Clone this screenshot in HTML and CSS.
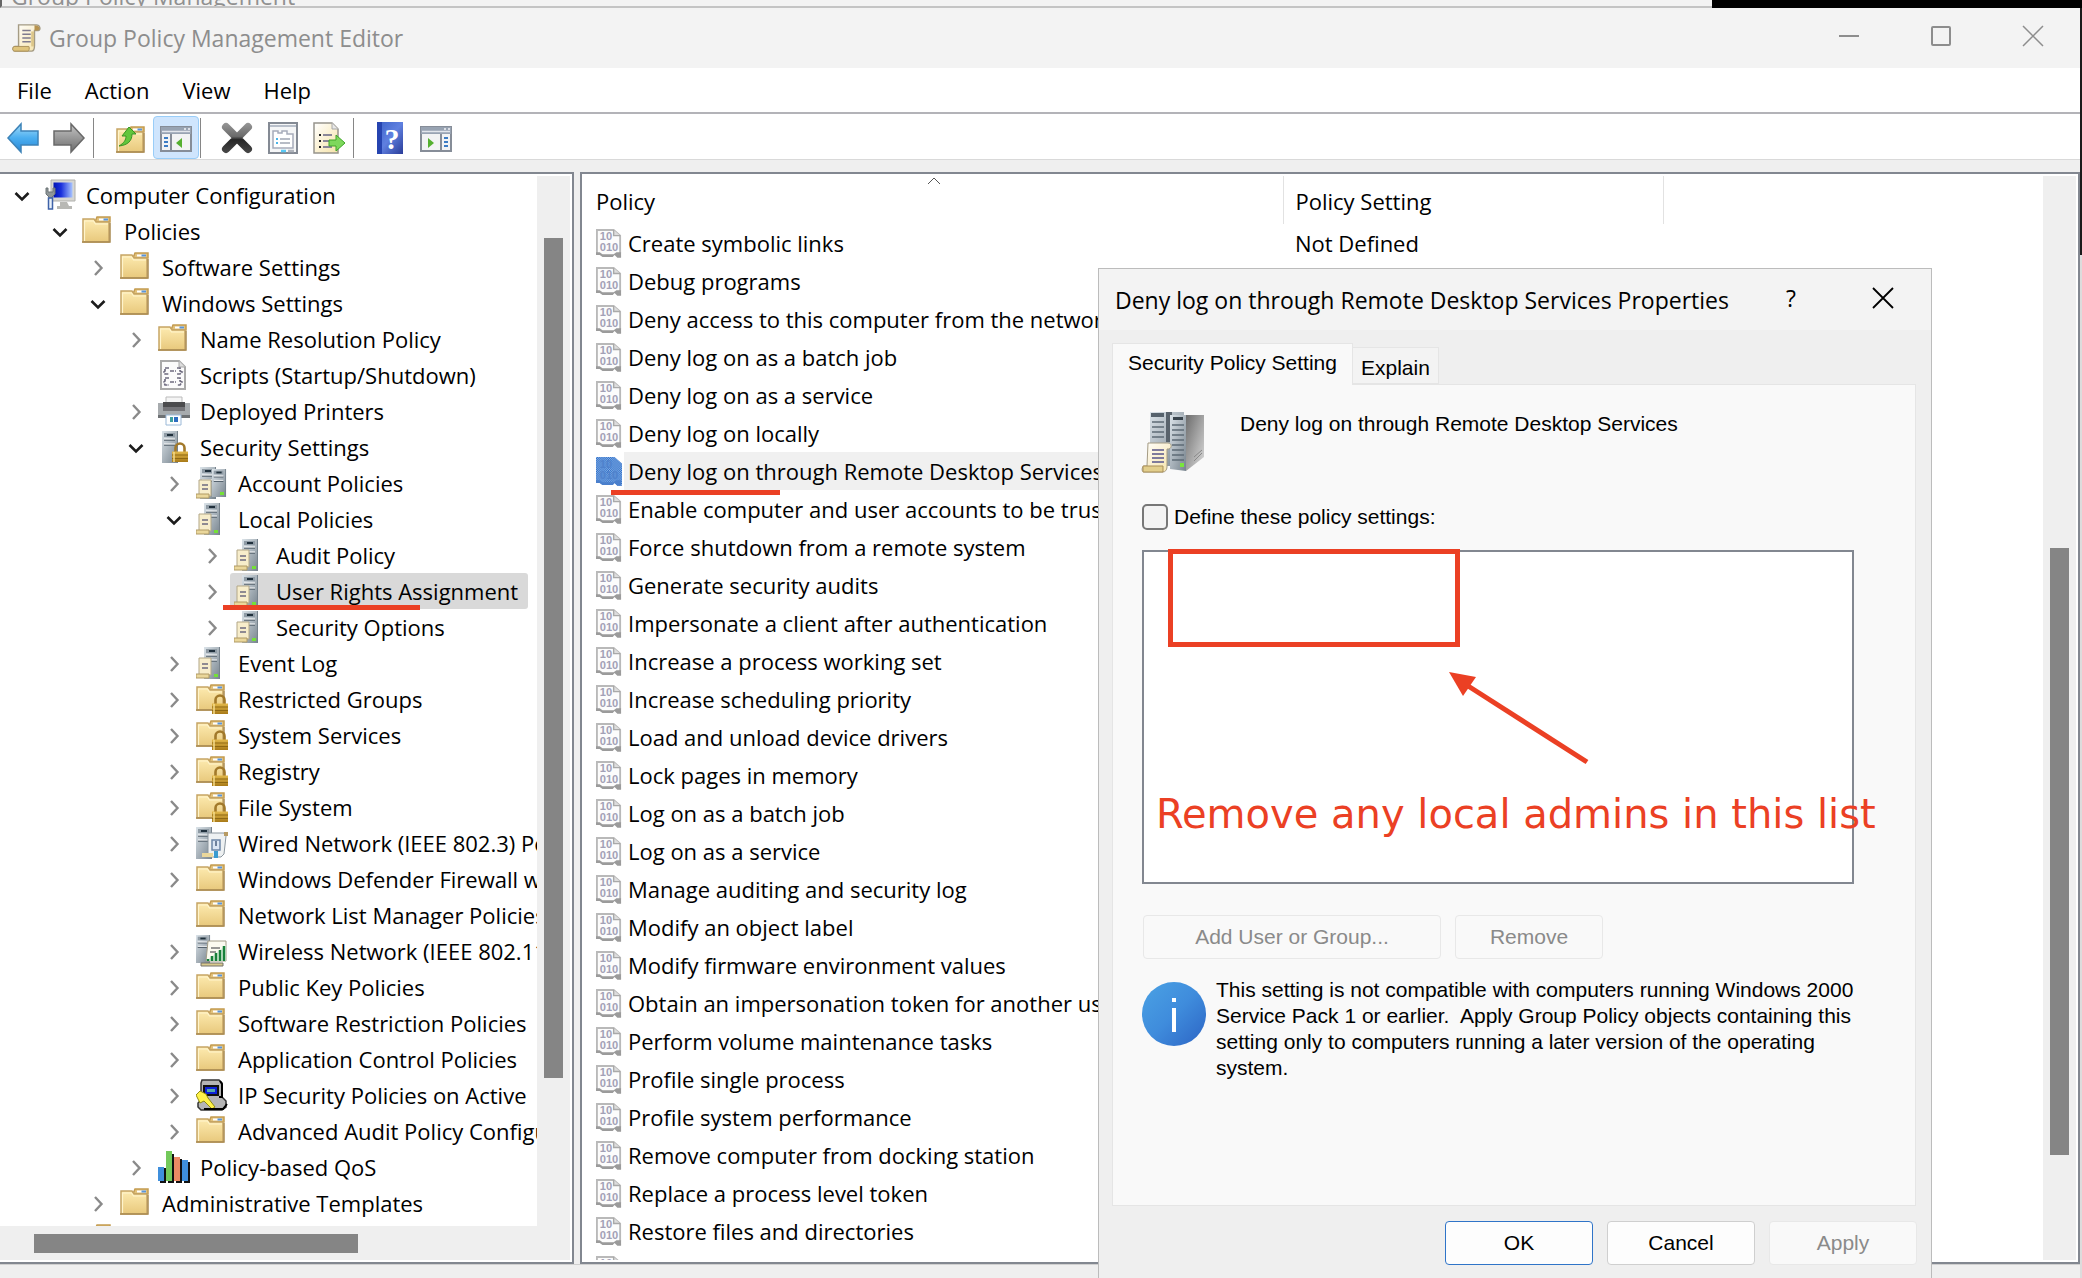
FILE: index.html
```html
<!DOCTYPE html>
<html lang="en">
<head>
<meta charset="utf-8">
<title>Group Policy Management Editor</title>
<link rel="stylesheet" href="styles.css">
</head>
<body>
<svg class="defs" aria-hidden="true">
  <defs>
    <linearGradient id="gFolder" x1="0" y1="0" x2="0" y2="1"><stop offset="0" stop-color="#fdebb0"/><stop offset="1" stop-color="#e8c87c"/></linearGradient>
    <linearGradient id="gBlue" x1="0" y1="0" x2="0" y2="1"><stop offset="0" stop-color="#a5dcf8"/><stop offset="0.5" stop-color="#4aaef0"/><stop offset="1" stop-color="#2a86d4"/></linearGradient>
    <linearGradient id="gGrey" x1="0" y1="0" x2="0" y2="1"><stop offset="0" stop-color="#c4c4c4"/><stop offset="1" stop-color="#6c6c6c"/></linearGradient>
    <linearGradient id="gServer" x1="0" y1="0" x2="1" y2="1"><stop offset="0" stop-color="#dbe3e9"/><stop offset="1" stop-color="#77838d"/></linearGradient>
    <linearGradient id="gCase" x1="0" y1="0" x2="1" y2="1"><stop offset="0" stop-color="#6d6d6d"/><stop offset="1" stop-color="#dcdcdc"/></linearGradient>
    <linearGradient id="gPaper" x1="0" y1="0" x2="1" y2="1"><stop offset="0" stop-color="#ffffff"/><stop offset="1" stop-color="#f6e3a8"/></linearGradient>
    <linearGradient id="gLock" x1="0" y1="0" x2="0" y2="1"><stop offset="0" stop-color="#e2b84a"/><stop offset="1" stop-color="#a87a18"/></linearGradient>
    <linearGradient id="gScreen" x1="0" y1="0" x2="1" y2="0"><stop offset="0" stop-color="#0014b4"/><stop offset="0.4" stop-color="#1a30dc"/><stop offset="1" stop-color="#a8c4ff"/></linearGradient>
    <linearGradient id="gHelp" x1="0" y1="0" x2="1" y2="1"><stop offset="0" stop-color="#3c62c8"/><stop offset="0.5" stop-color="#5f80e0"/><stop offset="1" stop-color="#2a3c98"/></linearGradient>
    <linearGradient id="gInfo" x1="0" y1="0" x2="1" y2="1"><stop offset="0" stop-color="#4ba2e4"/><stop offset="0.5" stop-color="#3f8cdc"/><stop offset="1" stop-color="#2c64c4"/></linearGradient>
    <linearGradient id="gX" gradientUnits="userSpaceOnUse" x1="0" y1="0" x2="0" y2="32"><stop offset="0" stop-color="#9a9a9a"/><stop offset="0.45" stop-color="#6a6a6a"/><stop offset="0.55" stop-color="#262626"/><stop offset="1" stop-color="#4a4a4a"/></linearGradient>
    <pattern id="hatch" width="2" height="2" patternUnits="userSpaceOnUse"><path d="M0 0h2v2H0z" fill="#8db4e6"/><path d="M0 0h1v1H0zM1 1h1v1H1z" fill="#2a6cc8"/></pattern>
  </defs>
  <symbol id="open" viewBox="0 0 16 16"><path d="M1.500 5 8 11.500 14.500 5" fill="none" stroke="#1c1c1c" stroke-width="2.600"/></symbol>
  <symbol id="closed" viewBox="0 0 16 16"><path d="M5 1 11.500 8 5 15" fill="none" stroke="#8a8a8a" stroke-width="2.400"/></symbol>
  <symbol id="folder" viewBox="0 0 32 32">
    <path d="M15 2h13v5H13z" fill="#e2c27c" stroke="#c49c50" stroke-width="1.500"/><path d="M17 3.500h9v2h-9z" fill="#fff"/><path d="M21.500 3.500H26v2h-4.500z" fill="#5b95d8"/>
    <path d="M1 4h11l2 3h13v20H1z" fill="url(#gFolder)" stroke="#c6a565" stroke-width="1.500"/><path d="M2.500 26V6h9l2 3H26" fill="none" stroke="#fff4cc" stroke-width="1.200"/><path d="M0 27h28V8" fill="none" stroke="#a98b52" stroke-width="1.500"/>
  </symbol>
  <symbol id="lock" viewBox="0 0 32 32"><path d="M19.500 21v-4a4.500 4.500 0 0 1 9 0v4" fill="none" stroke="#a2792a" stroke-width="2.600"/><path d="M16 20.500h16V31H16z" fill="url(#gLock)"/><path d="M16 24h16M16 27.500h16" stroke="#8f6812" stroke-width="1"/><path d="M18 21v10" stroke="#f6dc8c" stroke-width="1.500"/></symbol>
  <symbol id="folderlock" viewBox="0 0 32 32"><use href="#folder"/><use href="#lock"/></symbol>
  <symbol id="tower" viewBox="0 0 32 32"><path d="M0 0h16v32H0z" fill="url(#gServer)"/><path d="M2 2h11v4H2z" fill="#8f9ba5"/><path d="M5 3h6v2H5z" fill="#20303c"/><path d="M2 9h11M2 14h11" stroke="#56636e" stroke-width="1.500"/><path d="M2 8h11M2 13h11" stroke="#fff" stroke-width="1"/><path d="M15.500 0v32" stroke="#76828c"/></symbol>
  <symbol id="scroll" viewBox="0 0 32 32"><path d="M7 2h19c4 0 5 5 2 6h-4v16c0 4-1 6-3 6H3c-2 0-3-4 0-5h4z" fill="url(#gPaper)" stroke="#a49b84" stroke-width="1.500"/><path d="M24 2.500c6 0 7 5 3 5.500h-3z" fill="#b7934f"/><path d="M22 9v16" stroke="#dcc68a" stroke-width="3"/><path d="M3 25h15c1 2 0 5-1 5H3c-3 0-3-5 0-5z" fill="#dfc47c" stroke="#a98f58"/><path d="M11 8h9M11 12h9M11 16h9M11 20h9" stroke="#7f7b8e" stroke-width="1.800"/></symbol>
  <symbol id="serverlock" viewBox="0 0 32 32"><use href="#tower" x="4" y="0" width="32" height="32"/><use href="#lock" x="-2"/></symbol>
  <symbol id="policy" viewBox="0 0 32 32"><use href="#tower" x="8" width="32" height="32"/><path d="M18 27h4v3h-4z" fill="#74e038"/><path d="M3 11h12v17H3z" fill="#f7edcb" stroke="#b3a787"/><path d="M0 27h13v4H0z" fill="#ead79b" stroke="#b09a64"/><path d="M6 17h6M6 21h6" stroke="#6d6a80" stroke-width="1.600"/></symbol>
  <symbol id="account" viewBox="0 0 32 32"><use href="#tower" x="4" width="32" height="32"/><use href="#tower" x="16" y="2" width="28" height="28"/><path d="M24 25h4v3h-4z" fill="#74e038"/><path d="M3 13h12v16H3z" fill="#f7edcb" stroke="#b3a787"/><path d="M0 27h13v4H0z" fill="#ead79b" stroke="#b09a64"/><path d="M6 18h6M6 22h6" stroke="#6d6a80" stroke-width="1.600"/></symbol>
  <symbol id="wired" viewBox="0 0 32 32"><use href="#tower" width="32" height="32"/><path d="M12 6h16l2 3-2 18-3 3H12z" fill="#eef1f2" stroke="#8b969e"/><path d="M28 5h4v4h-4z" fill="#b89b63"/><path d="M16 13h8v10h-8z" fill="#dce6f4" stroke="#6e86a8" stroke-width="1.500"/><path d="M20 14v5" stroke="#4a5f80" stroke-width="1.500"/><path d="M6 26h11v4H6z" fill="#ead79b"/><path d="M18 24h4v7h-4z" fill="#3b9bd0"/></symbol>
  <symbol id="wireless" viewBox="0 0 32 32"><use href="#tower" width="28" height="28"/><path d="M12 6h18v20H10z" fill="#fbfaf0" stroke="#a39c88"/><path d="M15 13h9M14 17h6" stroke="#777" stroke-width="1.500"/><path d="M10 26 30 10v16z" fill="#dcefdc"/><path d="M12 26v-2M16 26v-5M20 26v-8M24 26V15M28 26V11" stroke="#17803a" stroke-width="2.500"/><path d="M5 28h22v3H5z" fill="#d8c98c" stroke="#77736a"/></symbol>
  <symbol id="computer" viewBox="0 0 32 32"><path d="M7 1h24v21H7z" fill="#d6d6d2" stroke="#b0b0ac"/><path d="M9.500 3.500h19v15h-19z" fill="url(#gScreen)"/><path d="M16 23h7l2 4h3v3H13v-3h3z" fill="#b8b8b4"/><path d="M2 9v6l3 3v11h3V18l3-3V9H9v4H4V9z" fill="#8f9698" stroke="#6c7476"/><path d="M4.500 19h4v11h-4z" fill="#e9f1fa" stroke="#3e62a8" stroke-width="1.500"/></symbol>
  <symbol id="script" viewBox="0 0 32 32"><path d="M3 2h18l6 6v22H3z" fill="#fbfbfb" stroke="#a9a9a9" stroke-width="2"/><path d="M21 2v6h6" fill="#ddd" stroke="#a9a9a9"/><path d="M11 9H7v3l-1 1 1 2h4M19 9h3v3l2 1-2 2h-3M11 19H7v3l-1 1 1 3h4M19 19h3v3l2 1-2 3h-3M12 12h6M12 23h6" fill="none" stroke="#6f6c80" stroke-width="1.700" stroke-dasharray="4 1"/></symbol>
  <symbol id="printer" viewBox="0 0 32 32"><path d="M8 2h16v8H8z" fill="#f4f4f4" stroke="#bbb"/><path d="M0 8h32v14H0z" fill="#a7abae"/><path d="M5 7h22v9H5z" fill="#4b4b4d"/><path d="M5 12h22v4H5z" fill="#747478"/><path d="M0 20h32v3H0z" fill="#6e7174"/><path d="M8 20h15v10H8z" fill="#fff" stroke="#9bb9d8"/><path d="M12 22h3v5h-3z" fill="#3fa0a0"/><path d="M16 22h4v5h-4z" fill="#2d6cc0"/></symbol>
  <symbol id="ipsec" viewBox="0 0 32 32"><path d="M6 1h17l3 3v14l4 4v6l-4 3H5l-3-3v-4l3-3V4z" fill="#b5b5b5" stroke="#333" stroke-width="1.500"/><path d="M8 7h14v9H8z" fill="#0d22d8" stroke="#111" stroke-width="2"/><path d="M11 10h8v3h-8z" fill="#5aa"/><path d="M24 2l2 3v13h-3" fill="none" stroke="#000" stroke-width="2"/><path d="M0 16l4-4 6 3 2 4 7 9-3 2-8-8-4 2z" fill="#fff34a" stroke="#8f8a10"/><path d="M8 30h19l4-5" fill="none" stroke="#000" stroke-width="2"/></symbol>
  <symbol id="qos" viewBox="0 0 32 32"><path d="M2 17h6v15H2zM10 3h6v29h-6zM18 8h6v24h-6zM26 11h6v21h-6z" fill="#111"/><path d="M0 16h6v14H0z" fill="#3f8fdc"/><path d="M8 0h6v30H8z" fill="#73c95a"/><path d="M16 6h6v24h-6z" fill="#ec8a64"/><path d="M24 9h6v21h-6z" fill="#3f8fdc"/></symbol>
  <symbol id="binary" viewBox="0 0 28 32"><path d="M1 2h19l6 6v19l2 4h-5l-3-3-2 2H7l-2-2H1z" fill="#fcfcfc"/><path d="M1 28V2h18l7 6v19" fill="none" stroke="#b9b9b9" stroke-width="2"/><path d="M19 2v6h7" fill="#ddd" stroke="#a9a9a9" stroke-width="1.500"/><path d="M0 26h4l3 2h12l3-2h5v6h-4l-3-3-2 2H7l-3-2H0z" fill="#9b9b9b"/><text x="4" y="13" class="bits">10</text><text x="4" y="25" class="bits">010</text></symbol>
  <symbol id="binarysel" viewBox="0 0 28 32"><path d="M0 1h20l8 7v24h-5l-3-3-2 2H7l-3-2H0z" fill="url(#hatch)"/><path d="M0 26h4l3 2h12l3-2h5v6h-4l-3-3-2 2H7l-3-2H0z" fill="#4a7fcc"/><text x="4" y="13" class="bits blue">10</text><text x="4" y="25" class="bits blue">010</text></symbol>
  <symbol id="window" viewBox="0 0 32 26"><path d="M1 1h30v24H1z" fill="#f2f3f4" stroke="#868d98" stroke-width="2"/><path d="M1 1h30v7H1z" fill="#98a3b2"/><path d="M2 5.500h28" stroke="#e2e6ec" stroke-width="1.500"/><path d="M24 3h2M28 3h2" stroke="#f2f4f8" stroke-width="1.500"/></symbol>
</svg>

<div class="behind"><span>Group Policy Management</span></div>

<div class="app">
  <header class="titlebar">
    <svg class="ic30"><use href="#scroll"/></svg>
    <h1>Group Policy Management Editor</h1>
    <div class="winbtns">
      <button aria-label="Minimize"><svg viewBox="0 0 20 20"><path d="M0 10h20" stroke-width="2"/></svg></button>
      <button aria-label="Maximize"><svg viewBox="0 0 20 20"><rect x="1" y="1" width="18" height="18" rx="1" stroke-width="2"/></svg></button>
      <button aria-label="Close"><svg viewBox="0 0 20 20"><path d="M0 0 20 20M20 0 0 20" stroke-width="1.500"/></svg></button>
    </div>
  </header>
  <nav class="menu"><button>File</button><button>Action</button><button>View</button><button>Help</button></nav>
  <div class="toolbar">
    <button aria-label="Back"><svg viewBox="0 0 32 32"><path d="M1 16 14 2v7h17v14H14v7z" fill="url(#gBlue)" stroke="#3d83b8" stroke-width="1.500"/></svg></button>
    <button aria-label="Forward"><svg viewBox="0 0 32 32"><path d="M31 16 18 2v7H1v14h17v7z" fill="url(#gGrey)" stroke="#696969" stroke-width="1.500"/></svg></button>
    <i></i>
    <button aria-label="Up"><svg viewBox="-2 -3 32 32"><use href="#folder" width="32" height="32"/><path d="M3 21c5-3 7-6 7-10H6l7-9 7 7h-4c0 7-4 11-13 12z" fill="#62c63c" stroke="#3b9424"/></svg></button>
    <button class="on" aria-label="Console tree"><svg viewBox="0 -4 32 32"><use href="#window" width="32" height="26"/><path d="M11 8v17" stroke="#868d98" stroke-width="2"/><path d="M4 12h4M4 16h4M4 20h4" stroke="#3c7cc4" stroke-width="2"/><path d="M22 12v10l-6-5z" fill="#55b030"/></svg></button>
    <i></i>
    <button aria-label="Delete"><svg viewBox="0 0 32 32"><path d="M5 5 27 27M27 5 5 27" stroke="url(#gX)" stroke-width="8" stroke-linecap="round"/></svg></button>
    <button aria-label="Properties"><svg viewBox="0 0 32 32"><path d="M2 1h28v30H2z" fill="#f5f6f7" stroke="#848a94" stroke-width="2"/><path d="M3 4h26" stroke="#b8bfca" stroke-width="2"/><path d="M6 9h5v2h4V9h5v3h6v14H6z" fill="#fff" stroke="#a6acba" stroke-width="1.500"/><path d="M9 17h2M9 21h2" stroke="#4ab4e8" stroke-width="2"/><path d="M13 17h10M13 21h10" stroke="#a0a6b4" stroke-width="1.500"/><path d="M14 29h5" stroke="#58c8f4" stroke-width="2.500"/><path d="M21 29h6" stroke="#b0b4bc" stroke-width="2.500"/></svg></button>
    <button aria-label="Export"><svg viewBox="0 0 32 32"><path d="M1 1h18l6 6v24H1z" fill="url(#gPaper)" stroke="#97948c" stroke-width="1.500"/><path d="M19 1v6h6" fill="#e8e8e8" stroke="#a8a8a8"/><path d="M6 13h2M6 19h2M6 25h2" stroke="#222" stroke-width="2"/><path d="M10 13h9M10 19h6M10 25h9" stroke="#8a8798" stroke-width="2"/><path d="M16 18h7v-5l9 8-9 8v-5h-7z" fill="#7ed85c" stroke="#3fa528"/></svg></button>
    <i></i>
    <button aria-label="Help topics"><svg viewBox="0 0 32 32"><path d="M3 0h26v32H3z" fill="url(#gHelp)"/><path d="M3 0h5v32H3z" fill="#2644b0"/><text x="18" y="27" class="q">?</text></svg></button>
    <button aria-label="Action pane"><svg viewBox="0 -4 32 32"><use href="#window" width="32" height="26"/><path d="M21 8v17" stroke="#868d98" stroke-width="2"/><path d="M24 12h4M24 16h4M24 20h4" stroke="#3c7cc4" stroke-width="2"/><path d="M8 12v10l6-5z" fill="#55b030"/></svg></button>
  </div>

  <main class="panes">
    <section class="pane treepane">
      <ul class="tree">
        <li class="l0"><svg class="tw"><use href="#open"/></svg><svg class="ic"><use href="#computer"/></svg><span>Computer Configuration</span></li>
        <li class="l1"><svg class="tw"><use href="#open"/></svg><svg class="ic"><use href="#folder"/></svg><span>Policies</span></li>
        <li class="l2"><svg class="tw"><use href="#closed"/></svg><svg class="ic"><use href="#folder"/></svg><span>Software Settings</span></li>
        <li class="l2"><svg class="tw"><use href="#open"/></svg><svg class="ic"><use href="#folder"/></svg><span>Windows Settings</span></li>
        <li class="l3"><svg class="tw"><use href="#closed"/></svg><svg class="ic"><use href="#folder"/></svg><span>Name Resolution Policy</span></li>
        <li class="l3"><svg class="tw"></svg><svg class="ic"><use href="#script"/></svg><span>Scripts (Startup/Shutdown)</span></li>
        <li class="l3"><svg class="tw"><use href="#closed"/></svg><svg class="ic"><use href="#printer"/></svg><span>Deployed Printers</span></li>
        <li class="l3"><svg class="tw"><use href="#open"/></svg><svg class="ic"><use href="#serverlock"/></svg><span>Security Settings</span></li>
        <li class="l4"><svg class="tw"><use href="#closed"/></svg><svg class="ic"><use href="#account"/></svg><span>Account Policies</span></li>
        <li class="l4"><svg class="tw"><use href="#open"/></svg><svg class="ic"><use href="#policy"/></svg><span>Local Policies</span></li>
        <li class="l5"><svg class="tw"><use href="#closed"/></svg><svg class="ic"><use href="#policy"/></svg><span>Audit Policy</span></li>
        <li class="l5 sel"><svg class="tw"><use href="#closed"/></svg><div class="hit"><svg class="ic"><use href="#policy"/></svg><span>User Rights Assignment</span><b class="mark"></b></div></li>
        <li class="l5"><svg class="tw"><use href="#closed"/></svg><svg class="ic"><use href="#policy"/></svg><span>Security Options</span></li>
        <li class="l4"><svg class="tw"><use href="#closed"/></svg><svg class="ic"><use href="#policy"/></svg><span>Event Log</span></li>
        <li class="l4"><svg class="tw"><use href="#closed"/></svg><svg class="ic"><use href="#folderlock"/></svg><span>Restricted Groups</span></li>
        <li class="l4"><svg class="tw"><use href="#closed"/></svg><svg class="ic"><use href="#folderlock"/></svg><span>System Services</span></li>
        <li class="l4"><svg class="tw"><use href="#closed"/></svg><svg class="ic"><use href="#folderlock"/></svg><span>Registry</span></li>
        <li class="l4"><svg class="tw"><use href="#closed"/></svg><svg class="ic"><use href="#folderlock"/></svg><span>File System</span></li>
        <li class="l4"><svg class="tw"><use href="#closed"/></svg><svg class="ic"><use href="#wired"/></svg><span>Wired Network (IEEE 802.3) Policies</span></li>
        <li class="l4"><svg class="tw"><use href="#closed"/></svg><svg class="ic"><use href="#folder"/></svg><span>Windows Defender Firewall with</span></li>
        <li class="l4"><svg class="tw"></svg><svg class="ic"><use href="#folder"/></svg><span>Network List Manager Policies</span></li>
        <li class="l4"><svg class="tw"><use href="#closed"/></svg><svg class="ic"><use href="#wireless"/></svg><span>Wireless Network (IEEE 802.11)</span></li>
        <li class="l4"><svg class="tw"><use href="#closed"/></svg><svg class="ic"><use href="#folder"/></svg><span>Public Key Policies</span></li>
        <li class="l4"><svg class="tw"><use href="#closed"/></svg><svg class="ic"><use href="#folder"/></svg><span>Software Restriction Policies</span></li>
        <li class="l4"><svg class="tw"><use href="#closed"/></svg><svg class="ic"><use href="#folder"/></svg><span>Application Control Policies</span></li>
        <li class="l4"><svg class="tw"><use href="#closed"/></svg><svg class="ic"><use href="#ipsec"/></svg><span>IP Security Policies on Active</span></li>
        <li class="l4"><svg class="tw"><use href="#closed"/></svg><svg class="ic"><use href="#folder"/></svg><span>Advanced Audit Policy Configuration</span></li>
        <li class="l3"><svg class="tw"><use href="#closed"/></svg><svg class="ic"><use href="#qos"/></svg><span>Policy-based QoS</span></li>
        <li class="l2"><svg class="tw"><use href="#closed"/></svg><svg class="ic"><use href="#folder"/></svg><span>Administrative Templates</span></li>
        <li class="l1"><svg class="tw"></svg><svg class="ic"><use href="#folder"/></svg></li>
      </ul>
      <div class="vbar"><div class="thumb tree-thumb"></div></div>
      <div class="hbar"><div class="thumb"></div></div>
    </section>

    <section class="pane listpane">
      <div class="listwrap">
        <svg class="sort" viewBox="0 0 14 8"><path d="M1 7 7 1l6 6" fill="none" stroke="#555"/></svg>
        <table class="list">
          <colgroup><col class="c1"><col class="c2"><col></colgroup>
          <thead><tr><th>Policy</th><th>Policy Setting</th><th></th></tr></thead>
          <tbody>
            <tr><td><svg class="bin"><use href="#binary"/></svg><span>Create symbolic links</span></td><td>Not Defined</td><td></td></tr>
            <tr><td><svg class="bin"><use href="#binary"/></svg><span>Debug programs</span></td><td></td><td></td></tr>
            <tr><td><svg class="bin"><use href="#binary"/></svg><span>Deny access to this computer from the network</span></td><td></td><td></td></tr>
            <tr><td><svg class="bin"><use href="#binary"/></svg><span>Deny log on as a batch job</span></td><td></td><td></td></tr>
            <tr><td><svg class="bin"><use href="#binary"/></svg><span>Deny log on as a service</span></td><td></td><td></td></tr>
            <tr><td><svg class="bin"><use href="#binary"/></svg><span>Deny log on locally</span></td><td></td><td></td></tr>
            <tr class="picked"><td><svg class="bin"><use href="#binarysel"/></svg><span>Deny log on through Remote Desktop Services</span><b class="mark"></b></td><td></td><td></td></tr>
            <tr><td><svg class="bin"><use href="#binary"/></svg><span>Enable computer and user accounts to be trusted</span></td><td></td><td></td></tr>
            <tr><td><svg class="bin"><use href="#binary"/></svg><span>Force shutdown from a remote system</span></td><td></td><td></td></tr>
            <tr><td><svg class="bin"><use href="#binary"/></svg><span>Generate security audits</span></td><td></td><td></td></tr>
            <tr><td><svg class="bin"><use href="#binary"/></svg><span>Impersonate a client after authentication</span></td><td></td><td></td></tr>
            <tr><td><svg class="bin"><use href="#binary"/></svg><span>Increase a process working set</span></td><td></td><td></td></tr>
            <tr><td><svg class="bin"><use href="#binary"/></svg><span>Increase scheduling priority</span></td><td></td><td></td></tr>
            <tr><td><svg class="bin"><use href="#binary"/></svg><span>Load and unload device drivers</span></td><td></td><td></td></tr>
            <tr><td><svg class="bin"><use href="#binary"/></svg><span>Lock pages in memory</span></td><td></td><td></td></tr>
            <tr><td><svg class="bin"><use href="#binary"/></svg><span>Log on as a batch job</span></td><td></td><td></td></tr>
            <tr><td><svg class="bin"><use href="#binary"/></svg><span>Log on as a service</span></td><td></td><td></td></tr>
            <tr><td><svg class="bin"><use href="#binary"/></svg><span>Manage auditing and security log</span></td><td></td><td></td></tr>
            <tr><td><svg class="bin"><use href="#binary"/></svg><span>Modify an object label</span></td><td></td><td></td></tr>
            <tr><td><svg class="bin"><use href="#binary"/></svg><span>Modify firmware environment values</span></td><td></td><td></td></tr>
            <tr><td><svg class="bin"><use href="#binary"/></svg><span>Obtain an impersonation token for another user</span></td><td></td><td></td></tr>
            <tr><td><svg class="bin"><use href="#binary"/></svg><span>Perform volume maintenance tasks</span></td><td></td><td></td></tr>
            <tr><td><svg class="bin"><use href="#binary"/></svg><span>Profile single process</span></td><td></td><td></td></tr>
            <tr><td><svg class="bin"><use href="#binary"/></svg><span>Profile system performance</span></td><td></td><td></td></tr>
            <tr><td><svg class="bin"><use href="#binary"/></svg><span>Remove computer from docking station</span></td><td></td><td></td></tr>
            <tr><td><svg class="bin"><use href="#binary"/></svg><span>Replace a process level token</span></td><td></td><td></td></tr>
            <tr><td><svg class="bin"><use href="#binary"/></svg><span>Restore files and directories</span></td><td></td><td></td></tr>
            <tr><td><svg class="bin"><use href="#binary"/></svg></td><td></td><td></td></tr>
          </tbody>
        </table>
      </div>
      <div class="vbar"><div class="thumb list-thumb"></div></div>
    </section>
  </main>
  <footer class="status"></footer>
</div>

<div class="dialog" role="dialog" aria-labelledby="dlg-title">
  <header class="dlg-title">
    <h2 id="dlg-title">Deny log on through Remote Desktop Services Properties</h2>
    <button class="ask">?</button>
    <button aria-label="Close dialog"><svg viewBox="0 0 20 20"><path d="M0 0 20 20M20 0 0 20" stroke-width="1.800"/></svg></button>
  </header>
  <div class="tabs"><button class="tab active">Security Policy Setting</button><button class="tab">Explain</button></div>
  <div class="sheet">
    <div class="intro">
      <svg viewBox="0 0 62 62"><path d="M8 1h34v54H8z" fill="url(#gServer)"/><path d="M9 2h13v4H9z" fill="#56626c"/><path d="M10 11h12M10 16h12M10 21h12M10 26h12" stroke="#5e6b76" stroke-width="1.500"/><path d="M24 1h6v30h-6z" fill="#59636c"/><path d="M44 4h18v42L44 60z" fill="url(#gCase)"/><path d="M28 4h16v56l-16-2z" fill="url(#gServer)"/><path d="M31 6h10v3H31z" fill="#39444d"/><path d="M30 14h12M30 19h12M30 24h12M30 29h12M30 34h12M30 39h12M30 44h12M30 49h12" stroke="#5e6b76" stroke-width="1.500"/><path d="M38 52h4v4h-4z" fill="#79e63c"/><path d="M52 50 60 42M52 46l8-7" stroke="#888"/><path d="M6 32h20c4 0 4 5 1 6h-2v18c0 3-2 5-4 5H2c-3 0-2-6 0-6h3z" fill="url(#gPaper)" stroke="#a49b84"/><path d="M1 55h20v6H1z" fill="#e2ce8c" stroke="#a98f58"/><path d="M10 39h12M10 43h12M10 47h12M10 51h12" stroke="#7f7b9c" stroke-width="2"/></svg>
      <p>Deny log on through Remote Desktop Services</p>
    </div>
    <label class="check"><input type="checkbox"><span>Define these policy settings:</span></label>
    <div class="members">
      <div class="redbox"></div>
      <svg class="arrow" viewBox="0 0 144 96"><path d="M142 93 20 15" stroke="#eb4024" stroke-width="5"/><path d="M4 3 31 8 18 27z" fill="#eb4024"/></svg>
      <p class="note">Remove any local admins in this list</p>
    </div>
    <div class="acts"><button class="btn wide" disabled>Add User or Group...</button><button class="btn" disabled>Remove</button></div>
    <div class="info">
      <svg viewBox="0 0 64 64"><circle cx="32" cy="32" r="32" fill="url(#gInfo)"/><path d="M30 16h4v4h-4zM30 26h4v24h-4z" fill="#fff"/></svg>
      <p>This setting is not compatible with computers running Windows 2000<br>Service Pack 1 or earlier.&nbsp; Apply Group Policy objects containing this<br>setting only to computers running a later version of the operating<br>system.</p>
    </div>
  </div>
  <div class="dlg-foot"><button class="btn primary">OK</button><button class="btn">Cancel</button><button class="btn" disabled>Apply</button></div>
</div>
</body>
</html>
```
FILE: styles.css
```css
* { box-sizing: border-box; }

html, body { height: 100%; }

body {
  margin: 0;
  display: flex;
  flex-direction: column;
  overflow: hidden;
  background: linear-gradient(#1a1a1a 255px, #dcdcdc 255px);
  color: #000;
  font: 22px/36px "Open Sans", "Noto Sans", sans-serif;
}

button {
  border: 0;
  padding: 0;
  background: none;
  color: inherit;
  font: inherit;
}

h1, h2, p, ul { margin: 0; padding: 0; font: inherit; }
svg { flex: none; fill: none; overflow: visible; }
.defs { position: absolute; width: 0; height: 0; }
.bits { font: bold 12px "Liberation Sans", Arial, sans-serif; fill: #a3a1b6; }
.bits.blue { fill: #4f82cc; }
.q { font: bold 30px "Liberation Serif", serif; fill: #fff; text-anchor: middle; }

/* Window underneath */
.behind {
  flex: none;
  display: flex;
  align-items: flex-end;
  width: 1712px;
  height: 8px;
  padding-left: 9px;
  overflow: hidden;
  background: #f3f3f3;
  border-left: 2px solid #666;
  border-bottom: 2px solid #c4c4c4;
  box-shadow: 400px 0 0 #000;
  color: #909090;
  font-size: 23px;
}
.behind span { line-height: 20px; }

/* Main window */
.app {
  flex: 1;
  min-height: 0;
  display: flex;
  flex-direction: column;
  margin-right: 2px;
  background: #efefef;
}

.titlebar {
  flex: none;
  display: flex;
  align-items: center;
  height: 60px;
  padding-left: 12px;
  background: #f3f3f3;
  color: #8d8d8d;
  font-size: 23px;
}
.ic30 { width: 30px; height: 32px; margin-right: 7px; }
.winbtns { display: flex; margin-left: auto; padding-right: 1px; align-self: flex-start; }
.winbtns button { width: 92px; height: 56px; display: grid; place-items: center; }
.winbtns svg { width: 20px; height: 20px; stroke: #8d8d8d; }

.menu {
  flex: none;
  display: flex;
  gap: 33px;
  height: 46px;
  padding-left: 17px;
  background: #fff;
  border-bottom: 2px solid #b3b3b8;
  align-items: center;
}

.toolbar {
  flex: none;
  display: flex;
  align-items: stretch;
  height: 46px;
  padding-top: 2px;
  background: #fff;
  border-bottom: 1px solid #d9d9d9;
}
.toolbar button { width: 46px; display: grid; place-items: center; border: 1px solid transparent; border-radius: 4px; }
.toolbar button.on { background: #cfe5fd; border-color: #99cdf8; }
.toolbar svg { width: 32px; height: 32px; }
.toolbar i { width: 1px; margin: 2px 13px 1px 1px; background: #868686; }

.panes {
  flex: 1;
  min-height: 0;
  display: flex;
  gap: 6px;
  padding-top: 12px;
}
.pane { background: #fff; border: 2px solid #828790; padding: 2px; overflow: hidden; }
.vbar { background: #efefef; padding: 0 7px; }
.thumb { background: #858585; }
.tree-thumb { height: 80%; margin-top: 62px; }
.list-thumb { height: 56%; margin-top: 372px; }

.treepane {
  flex: none;
  width: 574px;
  border-left: 0;
  padding-left: 0;
  display: grid;
  grid-template: minmax(0, 1fr) 34px / minmax(0, 1fr) 33px;
}
.hbar { grid-column: 1 / 3; background: #efefef; padding: 8px 0 7px 34px; }
.hbar .thumb { width: 324px; height: 100%; }

.tree { list-style: none; overflow: hidden; padding-top: 1px; }
.tree li { display: flex; align-items: center; height: 36px; white-space: nowrap; }
.tw { width: 16px; height: 16px; margin: 2px 14px 0 14px; }
.ic { width: 32px; height: 32px; margin-right: 10px; }
.l1 { padding-left: 38px; }
.l2 { padding-left: 76px; }
.l3 { padding-left: 114px; }
.l4 { padding-left: 152px; }
.l5 { padding-left: 190px; }
.hit {
  position: relative;
  display: flex;
  align-items: center;
  height: 36px;
  margin-left: -4px;
  padding: 0 10px 0 4px;
  background: #d9d9d9;
  border-radius: 3px;
}
.mark { position: absolute; height: 5px; background: #eb4024; z-index: 1; }
.hit .mark { left: -7px; top: 32px; width: 197px; }

.listpane {
  flex: 1;
  min-width: 0;
  display: grid;
  grid-template: minmax(0, 1fr) / minmax(0, 1fr) 33px;
}
.listwrap { position: relative; overflow: hidden; }
.sort { position: absolute; left: 343px; top: 1px; width: 14px; height: 8px; }
.list { width: 100%; table-layout: fixed; border-collapse: collapse; }
.c1 { width: 699px; }
.c2 { width: 380px; }
.list th { height: 48px; padding: 2px 12px 0; text-align: left; font-weight: 400; border-right: 1px solid #e2e2e2; background: #fff; }
.list th:last-child { border: 0; }
.list td { height: 38px; padding: 0 12px; white-space: nowrap; }
.list td:first-child { position: relative; overflow: hidden; }
.list td:first-child span { margin-left: 2px; padding-left: 4px; display: inline-block; height: 38px; line-height: 38px; vertical-align: top; }
.bin { width: 26px; height: 30px; margin-top: 4px; vertical-align: top; }
.picked span { background: #f0f0f0; }
.picked .mark { left: 27px; top: 38px; width: 169px; }
.list .picked td:first-child { overflow: visible; }

.status { flex: none; height: 14px; border-top: 1px solid #d0d0d0; }

/* Properties dialog */
.dialog {
  position: absolute;
  left: 1098px;
  top: 268px;
  width: 834px;
  height: 1020px;
  display: flex;
  flex-direction: column;
  background: #efefef;
  border: 1px solid #bcbcbc;
  font-family: "Liberation Sans", Arial, sans-serif;
  font-size: 21px;
}
.dlg-title {
  flex: none;
  display: flex;
  height: 61px;
  padding: 0 2px 0 16px;
  background: #f3f3f3;
  font-family: "Open Sans", "Noto Sans", sans-serif;
  font-size: 23px;
}
.dlg-title h2 { flex: 1; line-height: 62px; white-space: nowrap; }
.dlg-title button { width: 92px; height: 58px; display: grid; place-items: center; }
.dlg-title svg { width: 20px; height: 20px; stroke: #000; }

.tabs { flex: none; display: flex; align-items: flex-end; height: 54px; padding-left: 13px; }
.tab {
  height: 37px;
  padding: 2px 8px 0;
  background: #f3f3f3;
  border: 1px solid #e5e5e5;
  border-left: 0;
}
.tab.active {
  position: relative;
  z-index: 1;
  height: 42px;
  margin-bottom: -1px;
  width: 241px;
  padding: 0 0 4px 15px;
  text-align: left;
  background: #f9f9f9;
  border-left: 1px solid #e5e5e5;
  border-bottom: 0;
}

.sheet {
  flex: none;
  height: 822px;
  margin: 0 15px 0 13px;
  padding: 26px 28px 0 29px;
  background: #f9f9f9;
  border: 1px solid #e5e5e5;
}
.intro { display: flex; gap: 36px; height: 94px; }
.intro svg { width: 62px; height: 62px; }
.intro p { line-height: 26px; }
.check { display: flex; align-items: center; gap: 6px; height: 24px; }
.check input {
  appearance: none;
  width: 26px;
  height: 26px;
  margin: 0;
  background: #f3f3f3;
  border: 2px solid #777;
  border-radius: 5px;
}
.members {
  position: relative;
  width: 712px;
  height: 334px;
  margin-top: 21px;
  background: #fff;
  border: 2px solid #828790;
}
.redbox { position: absolute; left: 24px; top: -3px; width: 292px; height: 98px; border: 5px solid #eb4024; }
.arrow { position: absolute; left: 301px; top: 117px; width: 144px; height: 96px; }
.note {
  position: absolute;
  left: 12px;
  top: 238px;
  white-space: nowrap;
  color: #eb4024;
  font: 40px/48px "DejaVu Sans", Verdana, sans-serif;
}
.acts { display: flex; gap: 14px; margin: 31px 0 0 1px; }
.btn {
  width: 148px;
  height: 44px;
  background: #fdfdfd;
  border: 1px solid #cfcfcf;
  border-radius: 4px;
}
.btn.wide { width: 298px; }
.btn.primary { border-color: #2f74c8; }
.btn:disabled { color: #8a8a8a; background: #f9f9f9; border-color: #e8e8e8; }
.info { display: flex; gap: 10px; margin-top: 18px; }
.info svg { width: 64px; height: 64px; margin-top: 5px; }
.info p { line-height: 26px; white-space: nowrap; }
.dlg-foot { display: flex; justify-content: flex-end; gap: 14px; padding: 15px 14px 0 0; }
```
